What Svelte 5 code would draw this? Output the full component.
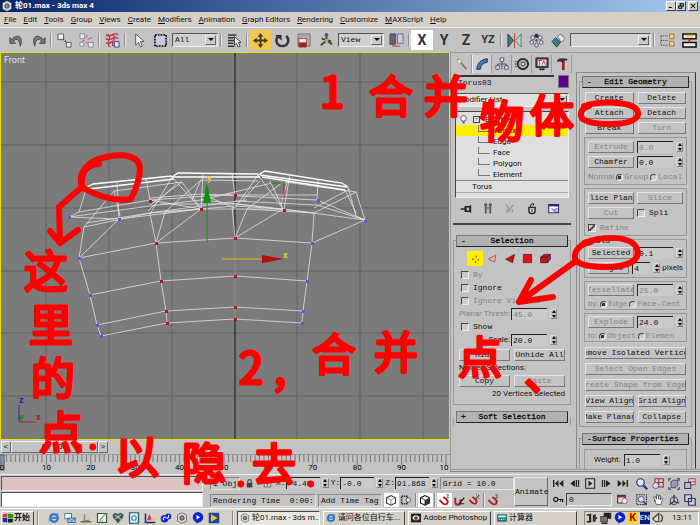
<script>
  const menus = ['File', 'Edit', 'Tools', 'Group', 'Views', 'Create', 'Modifiers', 'Animation', 'Graph Editors', 'Rendering', 'Customize', 'MAXScript', 'Help']

  // icon bodies, drawn on a 16x16 grid
  const icons = {
    logo: '<path d="M8 1l6 3v8l-6 3-6-3V4z" fill="#ddd" stroke="#555"/><circle cx="8" cy="8" r="3" fill="#888" stroke="#333"/>',
    undo: '<path d="M1 5v6h6L5 9c2-4 6-3 7 5 4-10-3-14-9-7z" fill="#777" stroke="#444"/>',
    redo: '<path d="M15 5v6H9l2-2C9 5 5 6 4 14 0 4 7 0 13 7z" fill="#777" stroke="#444"/>',
    link: '<path d="M1 1h6v6H1zM10 10h5v5h-5z" fill="#eef" stroke="#557"/><path d="M6 6l5 5" stroke="#b33" stroke-width="2" stroke-dasharray="2 1"/>',
    unlink: '<path d="M1 1h5v5H1zM10 10h5v5h-5zM1 10h4v4H1z" fill="#eef" stroke="#889"/><path d="M7 5l2-3M9 7l5-2M6 8l-3 1M8 9l1 3" stroke="#c55"/>',
    bind: '<path d="M1 2c5 4 8-4 13 0M1 6c5 4 8-4 13 0M1 10c4 4 5-2 8-1M3 1c6 4-3 9 2 14M8 1c6 4-3 9 1 13" fill="none" stroke="#b34" stroke-width="1.4"/><path d="M10 9h5v6h-5z" fill="#dde" stroke="#447"/>',
    select: '<path d="M5 1v12l3-3 2 5 2-1-2-5h4z" fill="#f2f2f2" stroke="#555"/>',
    region: '<path d="M2 2h12v12H2z" fill="#c9c9dd" stroke="#222" stroke-width="2" stroke-dasharray="2 1"/>',
    byname: '<path d="M1 2h9M1 5h7M1 8h7M1 11h6M1 14h7" stroke="#333" stroke-width="1.6"/><path d="M8 4v9l2-2 2 4 2-1-2-4h3z" fill="#eee" stroke="#444"/>',
    move: '<path d="M8 0l3 4H9v3h3V5l4 3-4 3V9H9v3h2l-3 4-3-4h2V9H4v2L0 8l4-3v2h3V4H5z" fill="#443b22"/>',
    rotate: '<path d="M4 3c-5 4-2 11 4 11 6 0 8-7 4-11" fill="none" stroke="#333" stroke-width="2.6"/><path d="M0 2h7v6z" fill="#333"/>',
    scale: '<path d="M1 1h13v13H1z" fill="#aaa" stroke="#777"/><path d="M2 6h8v9H2z" fill="#eee" stroke="#a44"/><path d="M2 10h8v5H2z" fill="#922"/>',
    manip: '<path d="M8 2v6l-6 5M8 8l6 4M3 6l10 3" fill="none" stroke="#444" stroke-width="2"/><circle cx="8" cy="2" r="2" fill="#557"/><circle cx="8" cy="8" r="2" fill="#ca3"/>',
    pivot: '<path d="M1 1h6v11H1z" fill="#667" stroke="#446"/><path d="M9 1h6v10H9z" fill="#ccd" stroke="#668"/><path d="M4 8v6h8" fill="none" stroke="#b33"/>',
    mirror: '<path d="M1 1v14l6-7z" fill="#477" stroke="#244"/><path d="M15 1v14l-6-7z" fill="#ccc" stroke="#577"/><path d="M8 0v16" stroke="#b44"/>',
    array: '<g fill="#dde" stroke="#456"><circle cx="8" cy="3" r="2" fill="#222"/><circle cx="12" cy="5" r="2"/><circle cx="13" cy="10" r="2"/><circle cx="8" cy="13" r="2"/><circle cx="3" cy="10" r="2"/><circle cx="4" cy="5" r="2"/></g><circle cx="8" cy="8" r="1.5" fill="#a44"/>',
    align: '<path d="M1 9l4-4 5 5-4 5z" fill="#3a7f86" stroke="#245"/><path d="M7 4l3-3 5 5-4 4z" fill="#dfe4e6" stroke="#667"/>',
    tracks: '<path d="M1 3h7M1 8h7M1 13h7M1 3v10" stroke="#333" stroke-dasharray="1 1"/><path d="M10 1h5v5h-5zM10 9h5v5h-5z" fill="#f0d070" stroke="#975"/>',
    schematic: '<path d="M1 1h14v5H1zM1 10h14v5H1z" fill="#eee" stroke="#111" stroke-width="1.6"/><path d="M4 3h8" stroke="#dc2" stroke-width="2"/><path d="M8 6v4" stroke="#c22" stroke-width="2"/>',
    create: '<path d="M3 2l10 12" stroke="#777" stroke-width="2"/><path d="M5 1l1 3 3 1-3 1-1 3-1-3-3-1 3-1z" fill="#f6f0d0" stroke="#bb8"/>',
    modify: '<path d="M2 14C3 6 7 3 14 2v4c-5 1-7 3-8 8z" fill="#447bb5" stroke="#123"/>',
    hierarchy: '<path d="M6 1h4v4H6zM1 10h4v4H1zM11 10h4v4h-4z" fill="#eef" stroke="#446"/><path d="M8 5v3M3 10V8h10v2M8 8v6" fill="none" stroke="#446"/>',
    motion: '<circle cx="9" cy="8" r="6" fill="#aaa" stroke="#222" stroke-width="2"/><circle cx="9" cy="8" r="2" fill="#eee" stroke="#333"/><path d="M0 5h2M0 8h2M0 11h2" stroke="#333"/>',
    display: '<path d="M1 1h14v11H1z" fill="#445" stroke="#223"/><path d="M3 3h10v7H3z" fill="#f4eef4"/><path d="M5 4v5M4 4h4M8 9l2-5 2 5" stroke="#b24" fill="none"/><path d="M5 14h6" stroke="#223" stroke-width="2"/>',
    utility: '<path d="M2 5c1-4 5-4 12-3v2h-3v2H7V5z" fill="#333"/><path d="M8 5h3v10H8z" fill="#922"/>',
    pin: '<path d="M1 8h6M7 4v8M8 5h5v6H8zM14 3v10" stroke="#222" stroke-width="1.8" fill="none"/>',
    show: '<path d="M5 2v12M11 2v12M3 2h4M9 2h4" stroke="#555" stroke-width="2.4" fill="none"/><path d="M7 5h2v4H7z" fill="#777"/>',
    unique: '<path d="M2 3c3 0 4 3 5 8 2-5 3-8 6-8M4 8v5M11 8v5" stroke="#999" stroke-width="1.8" fill="none"/>',
    trash: '<path d="M4 6h8v5c0 4-8 4-8 0z" fill="#eee" stroke="#222" stroke-width="2"/><path d="M6 5c0-5 5-5 4-2M8 8v4" stroke="#222" stroke-width="1.5" fill="none"/>',
    config: '<path d="M1 2h13v11H1z" fill="#fff" stroke="#338" stroke-width="1.6"/><path d="M1 3h13" stroke="#228" stroke-width="3"/><path d="M4 8h3v3M9 8h5v4H9z" stroke="#338" fill="#dde"/>',
    bulb: '<circle cx="8" cy="6" r="5" fill="#fff" stroke="#333" stroke-width="1.4"/><path d="M6 11h4v4H6z" fill="#666"/>',
    vertex: '<path d="M3 8h2v2H3zM8 4h2v2H8zM11 9h2v2h-2zM7 12h2v2H7z" fill="#c22"/>',
    edge: '<path d="M2 9l11-6-2 10z" fill="none" stroke="#d44" stroke-width="1.4"/>',
    face: '<path d="M1 9l13-7-3 12z" fill="#c11" stroke="#411"/>',
    polygon: '<path d="M2 2h12v12H2z" fill="#d11" stroke="#511"/>',
    element: '<path d="M1 6l5-4h9v7l-4 5H1z" fill="#c11" stroke="#300"/><path d="M1 6h10l4-4M11 6v8" stroke="#300" fill="none"/><path d="M11 6l4-4v7l-4 5z" fill="#638"/>',
    lock: '<path d="M3 7h10v8H3z" fill="#444"/><path d="M5 7V4c0-4 6-4 6 0v3" fill="none" stroke="#444" stroke-width="2"/>',
    absmode: '<path d="M2 2h12v12H2z" fill="#ccc" stroke="#333"/><path d="M4 8h8M8 4v8" stroke="#333"/>',
    cube: '<path d="M2 5l6-3 6 3v7l-6 3-6-3z" fill="#fff" stroke="#333" stroke-width="1.4"/><path d="M2 5l6 3 6-3M8 8v7" stroke="#777" fill="none"/>',
    darkcube: '<path d="M2 5l6-3 6 3v7l-6 3-6-3z" fill="#fff" stroke="#111" stroke-width="1.4"/><path d="M8 8l6-3v7l-6 3z" fill="#333"/><path d="M2 5l6 3v7" stroke="#111" fill="none"/>',
    crossing: '<path d="M2 3h8v10H2z" fill="none" stroke="#222" stroke-width="1.8" stroke-dasharray="2 1"/><circle cx="11" cy="8" r="3" fill="#eee" stroke="#333"/>',
    snap: '<path d="M2 8l5 5c5 3 8-3 4-6L7 4" fill="none" stroke="#a22" stroke-width="2.6"/><path d="M11 1h3l-1 2 1 2h-3" stroke="#333" fill="none"/>',
    angle: '<path d="M3 5v6c1 5 7 4 7 0V7" fill="none" stroke="#a22" stroke-width="2.6"/><path d="M8 13l7-8M10 13h5" stroke="#222" stroke-width="1.6"/>',
    percent: '<path d="M2 8l4 4c5 3 7-2 4-5L6 4" fill="none" stroke="#a22" stroke-width="2.4"/><path d="M15 1l-4 5M11 1h1M14 6h1" stroke="#333" stroke-width="1.4"/>',
    first: '<path d="M1 3v10" stroke="#222" stroke-width="2"/><path d="M8 3v10L3 8zM15 3v10l-6-5z" fill="#222"/>',
    prev: '<path d="M9 3v10L2 8z" fill="#222"/><path d="M11 3v10M14 3v10" stroke="#222" stroke-width="1.6"/>',
    play: '<path d="M1 1h13v14H1z" fill="#ccc" stroke="#222" stroke-width="1.5"/><path d="M5 4v8l6-4z" fill="#222"/>',
    next: '<path d="M7 3v10l7-5z" fill="#222"/><path d="M5 3v10M2 3v10" stroke="#222" stroke-width="1.6"/>',
    last: '<path d="M15 3v10" stroke="#222" stroke-width="2"/><path d="M8 3v10l5-5zM1 3v10l6-5z" fill="#222"/>',
    key: '<circle cx="4" cy="8" r="3" fill="none" stroke="#222" stroke-width="1.8"/><path d="M7 8h8M14 8v4M11 8v3" stroke="#222" stroke-width="1.8"/>',
    timecfg: '<path d="M1 2h11v11H1z" fill="#ddd" stroke="#433" stroke-width="1.6"/><path d="M1 4h11" stroke="#822" stroke-width="2"/><circle cx="11" cy="10" r="4" fill="#eee" stroke="#933"/>',
    zoom: '<circle cx="6" cy="6" r="5" fill="#dfe6f4" stroke="#237" stroke-width="1.6"/><path d="M10 10l5 5" stroke="#237" stroke-width="3"/>',
    zoomall: '<path d="M4 1h11v11H4zM4 6h11M9 1v11" fill="#dcc" stroke="#833" stroke-width="1.4"/><circle cx="5" cy="10" r="4" fill="#dde" stroke="#447"/>',
    extents: '<path d="M4 5l3-2h6v7l-3 3H4z" fill="#99b" stroke="#336"/><path d="M1 4V1h3M12 1h3v3M1 12v3h3M15 12v3h-3" stroke="#336" fill="none" stroke-width="1.4"/>',
    extall: '<path d="M6 1h9v8H6z" fill="#ecc" stroke="#833"/><path d="M1 6h8v8H1z" fill="#bbd" stroke="#336" stroke-width="1.4"/><path d="M6 5h9" stroke="#833"/>',
    regzoom: '<path d="M1 1h13v13H1z" fill="none" stroke="#333" stroke-dasharray="2 1" stroke-width="1.4"/><circle cx="7" cy="7" r="4" fill="#dde" stroke="#336"/><path d="M10 10l4 4" stroke="#336" stroke-width="2"/>',
    pan: '<path d="M3 8l3 6h6l2-8-2-1-1 3V2H9v5L8 1H6v6L4 3 2 4l3 6z" fill="#fff" stroke="#444"/>',
    arc: '<circle cx="8" cy="9" r="5" fill="none" stroke="#447" stroke-width="1.4"/><path d="M8 1v9l-6 4M8 10l7 2" stroke="#333" stroke-width="1.6" fill="none"/>',
    minmax: '<path d="M1 1h9v9H1zM6 6h9v9H6z" fill="#ccd" stroke="#336" stroke-width="1.6"/>',
    windows: '<path d="M1 3l6-1v5H1z" fill="#d33"/><path d="M8 2l7 1v5H8z" fill="#292"/><path d="M1 8h6v6l-6-1z" fill="#22a"/><path d="M8 9h7l-1 5H8z" fill="#222"/>',
    ie: '<circle cx="8" cy="8" r="5" fill="none" stroke="#27c" stroke-width="3"/><path d="M4 8h8" stroke="#27c" stroke-width="2"/><path d="M1 13C0 8 10 0 15 3" stroke="#58b" fill="none"/>',
    outlook: '<path d="M1 2h9v7H1z" fill="#fff" stroke="#258"/><path d="M5 8h10v6H5z" fill="#9cf" stroke="#257"/><path d="M5 8l5 4 5-4" stroke="#257" fill="none"/>',
    desktop: '<path d="M1 13h14" stroke="#664" stroke-width="2"/><path d="M6 3v9M6 12l6-1" stroke="#886" stroke-width="2"/>',
    note: '<path d="M2 2h12v12H2z" fill="#fff" stroke="#255" stroke-width="1.6"/><path d="M5 11l8-9" stroke="#c93" stroke-width="2"/><path d="M4 12h6" stroke="#292"/>',
    heart: '<path d="M8 15L1 7V3l4-2 3 2 3-2 4 2v4z" fill="#355"/><path d="M4 4l8 6M12 4l-8 5" stroke="#acc" stroke-width="1.4"/>',
    viewer: '<path d="M2 1h12v14H2z" fill="#def" stroke="#256" stroke-width="1.6"/><circle cx="8" cy="8" r="3" fill="#fff" stroke="#28c" stroke-width="1.6"/>',
    paint: '<path d="M2 2v12h13" stroke="#228" fill="none" stroke-width="2"/><path d="M4 11l3-8 5 8z" fill="#c36"/><path d="M9 8h5v4H9z" fill="#ec3"/>',
    arrows: '<circle cx="6" cy="9" r="5" fill="#12c"/><circle cx="11" cy="6" r="4" fill="#12c"/><path d="M5 11c-2-3 1-5 3-4M11 4c2 3-1 5-3 4" stroke="#fff" fill="none" stroke-width="1.6"/>',
    globe: '<circle cx="8" cy="7" r="7" fill="#12c"/><path d="M8 14l-2 2V7h4z" fill="#12c"/><path d="M6 4l5 3-5 3z" fill="#fff"/>',
    player: '<path d="M1 1h14v14H1z" fill="#23459a"/><path d="M4 3l9 5-9 5z" fill="#fb3"/>',
    photoshop: '<path d="M0 1h16v14H0z" fill="#222"/><path d="M2 8c3-6 9-6 12 0-3 5-9 5-12 0z" fill="#fff"/><circle cx="8" cy="8" r="3" fill="#733"/>',
    calc: '<path d="M0 2h16v12H0z" fill="#277"/><path d="M2 4h12v3H2z" fill="#cff"/><path d="M3 10h10" stroke="#9dd" stroke-width="2" stroke-dasharray="2 1"/>',
    net: '<path d="M1 4h4v9H1M6 2v12M10 4v9M10 8h5M12 3v10" stroke="#222" stroke-width="1.8" fill="none"/>',
    monitors: '<path d="M5 1h10v8H5z" fill="#222"/><path d="M1 6h9v7H1z" fill="#777" stroke="#222"/><path d="M2 15h8" stroke="#222" stroke-width="2"/>',
    volume: '<path d="M1 9l8-7v11H5z" fill="#ddd" stroke="#333" stroke-width="1.4"/><path d="M11 3c4 2 4 8 0 10" stroke="#333" fill="none" stroke-width="1.6"/>'
  }

  const modifiers = ['Vertex', 'Edge', 'Face', 'Polygon', 'Element']
  const panel_tabs = ['create', 'modify', 'hierarchy', 'motion', 'display', 'utility']
  const stack_tools = ['pin', 'show', 'unique', 'trash', 'config']
  const sub_levels = ['vertex', 'edge', 'face', 'polygon', 'element']
  const playback = ['first', 'prev', 'play', 'next', 'last']
  const nav_tools = ['zoom', 'zoomall', 'extents', 'extall', 'regzoom', 'pan', 'arc', 'minmax']
  const quick_launch = ['ie', 'outlook', 'desktop', 'note', 'heart', 'viewer', 'paint', 'arrows', 'logo', 'globe', 'player']
  const tasks = [
    { icon: 'logo', title: '轮01.max - 3ds m...', active: true },
    { icon: 'ie', title: '请问各位自行车...' },
    { icon: 'photoshop', title: 'Adobe Photoshop' },
    { icon: 'calc', title: '计算器' }
  ]

  // viewport grid
  const grid_x = [46, 109, 172, 297, 360, 423]
  const grid_y = [82, 145, 208, 271, 333, 396]

  // lower part of the mesh, row by row
  const rows = [
    [[79, 258], [156, 243], [235, 238], [312, 243]],
    [[90, 295], [161, 281], [235, 276], [307, 281]],
    [[97, 325], [166, 311], [235, 307], [303, 311]],
    [[101, 336], [167, 323], [235, 319], [302, 323]]
  ]
  const columns = [0, 1, 2, 3].map((i) => rows.map((row) => row[i]))
  const wires = [
    '79,258 84,227 114,191 182,182', '79,258 119,219 201,209', '69,217 79,212 87,187', '79,212 150,200 235,194',
    '69,217 150,206 201,200 283,209', '69,217 119,219', '84,227 150,213 201,209', '86,223 163,211 247,200', '117,183 119,219', '114,191 120,216',
    '146,179 150,200 201,209', '172,177 201,209', '172,177 150,214 156,243', '182,182 201,209', '176,184 148,211',
    '156,243 165,212 201,180', '156,243 201,209', '182,182 150,205', '203,173 201,209', '232,173 235,195',
    '201,180 258,181', '201,180 192,200', '150,198 201,194 317,200', '160,204 235,204 314,213', '165,212 235,206 283,209',
    '201,209 232,209 283,209', '235,238 232,206', '235,238 247,209 283,182', '235,238 283,209',
    '258,175 235,208', '258,175 283,209', '270,181 283,209', '260,181 243,200', '290,174 284,209', '287,182 281,205',
    '318,180 317,200 365,220', '235,195 317,195', '235,201 317,205 365,220', '283,209 365,220', '247,209 314,213',
    '312,243 314,213 356,192', '312,243 365,220', '314,208 350,189', '348,187 356,216 365,220', '356,192 365,220',
    '285,182 356,192', '345,190 356,213', '201,194 235,208', '201,200 272,183'
  ]
  const ridges = [
    '87,187 93,184 172,176', '89,189 174,179', '172,177 178,173 258,174', '172,177 260,177',
    '258,175 265,171 342,183 348,187', '260,175 347,187', '262,177 345,190'
  ]
  const red_points = [...rows.flatMap((row) => [row[1], row[2]]), [150, 201], [201, 209], [235, 195], [284, 210]]
  const blue_points = [...rows.flatMap((row) => [row[0], row[3]]), [69, 217], [119, 219], [318, 200], [365, 221]]

  const ticks = Array.from({ length: 101 }, (_, i) => i)

  let sub_level = $state('Vertex')
  let frame = $state('0')
</script>

{#snippet icon(name)}
  <svg class="icon" viewBox="0 0 16 16" aria-hidden="true">{@html icons[name]}</svg>
{/snippet}

{#snippet tool(name, state = '')}
  <button class="tool {state}" aria-label={name}>{@render icon(name)}</button>
{/snippet}

{#snippet combo(label, value, size)}
  <span class="combo {size}">
    <select aria-label={label}><option>{value}</option></select>
  </span>
{/snippet}

{#snippet spin(label, value, disabled = false, size = '')}
  <span class="spin {size}">
    <input type="text" aria-label={label} {value} {disabled} />
    <span class="arrows"></span>
  </span>
{/snippet}

{#snippet check(label, disabled = false, checked = false)}
  <label class="option" class:off={disabled}><input type="checkbox" {disabled} {checked} />{label}</label>
{/snippet}

{#snippet radio(group, label, checked = false)}
  <label class="option off"><input type="radio" name={group} disabled {checked} />{label}</label>
{/snippet}

<div class="app">
  <header class="titlebar">
    {@render icon('logo')}
    <h1>轮01.max - 3ds max 4</h1>
    <div class="window-buttons">
      <button aria-label="Minimize"><svg viewBox="0 0 8 8"><path d="M1 6h4" /></svg></button>
      <button aria-label="Restore"><svg viewBox="0 0 8 8"><path d="M3 1h4v3H3zM1 4h4v3H1z" /></svg></button>
      <button class="close" aria-label="Close"><svg viewBox="0 0 8 8"><path d="M1 1l6 6M7 1L1 7" /></svg></button>
    </div>
  </header>

  <nav class="menubar">
    {#each menus as menu}
      <button><u>{menu[0]}</u>{menu.slice(1)}</button>
    {/each}
  </nav>

  <div class="toolbar">
    {@render tool('undo')}{@render tool('redo')}
    <i class="sep"></i>
    {@render tool('link')}{@render tool('unlink')}
    <i class="sep"></i>
    {@render tool('bind')}
    <i class="sep"></i>
    {@render tool('select')}{@render tool('region')}
    {@render combo('Selection filter', 'All', 'medium')}
    <i class="sep"></i>
    {@render tool('byname')}
    <i class="sep"></i>
    {@render tool('move', 'active')}{@render tool('rotate')}{@render tool('scale')}{@render tool('manip')}
    {@render combo('Coordinate system', 'View', 'medium')}
    {@render tool('pivot')}
    <i class="sep"></i>
    <button class="tool axis pressed">X</button>
    <button class="tool axis">Y</button>
    <button class="tool axis">Z</button>
    <button class="tool axis pair">YZ</button>
    <i class="sep"></i>
    {@render tool('mirror')}{@render tool('array')}{@render tool('align')}
    {@render combo('Named selection sets', '', 'wide')}
    <i class="sep"></i>
    {@render tool('tracks')}{@render tool('schematic')}
  </div>

  <main class="workspace">
    <div class="scene">
      <svg class="viewport" viewBox="1 53 448 386" preserveAspectRatio="xMidYMid slice">
        <g class="grid">
          {#each grid_x as x}<path d="M{x} 0v600" />{/each}
          {#each grid_y as y}<path d="M-200 {y}h900" />{/each}
          <path class="origin" d="M235 0v600" />
        </g>
        <g class="mesh">
          {#each [...rows, ...columns] as line}<polyline points={line.join(' ')} />{/each}
          {#each wires as points}<polyline {points} />{/each}
          {#each ridges as points}<polyline class="ridge" {points} />{/each}
        </g>
        {#each red_points as [x, y]}<rect class="picked" x={x - 1} y={y - 1} width="3" height="3" />{/each}
        {#each blue_points as [x, y]}<rect class="free" x={x - 1} y={y - 1} width="3" height="3" />{/each}
        <path d="M207 243v-55M271 183h12" stroke="#1a8a1a" />
        <path d="M203 203l4-20 4 20z" fill="#0c8f0c" />
        <path d="M284 184v14" stroke="#b22" />
        <path d="M222 259h42" stroke="#d8c010" />
        <path d="M262 255l22 4-22 4z" fill="#b80c0c" />
        <text class="gizmo" x="207" y="181">y</text>
        <text class="gizmo" x="283" y="258">x</text>
        <path d="M19 422v-17" stroke="#22a" />
        <path d="M19 422h17" stroke="#a22" />
        <text class="tripod blue" x="19" y="403">z</text>
        <text class="tripod green" x="19" y="420">y</text>
        <text class="tripod red" x="36" y="420">x</text>
        <text class="view-name" x="4" y="63">Front</text>
      </svg>

      <div class="time-slider">
        <button aria-label="Previous frame">&lt;</button>
        <button class="thumb">0 / 100</button>
        <button aria-label="Next frame">&gt;</button>
      </div>

      <svg class="ruler" viewBox="0 0 450 20">
        <path d="M0 0h450" />
        <rect x="0" y="1" width="4" height="15" />
        {#each ticks as t}
          <path d="M{2 + t * 4.44} 1v{t % 10 ? 7 : 10}" />
          {#if t % 10 === 0 && t < 100}<text x={2 + t * 4.44} y="16">{t}</text>{/if}
        {/each}
        <text x="444" y="16">10</text>
      </svg>
    </div>

    <aside class="command-panel">
      <div class="tabs">
        {#each panel_tabs as tab}{@render tool(tab, tab === 'modify' ? 'current' : '')}{/each}
      </div>

      <div class="panel-columns">
        <div class="left-column">
          <div class="object-name">
            <input type="text" aria-label="Object name" value="Torus03" />
            <span class="swatch"></span>
          </div>
          <span class="combo modifier-list">
            <select aria-label="Modifier List"><option>Modifier List</option></select>
          </span>
          <ul class="stack">
            <li class="mesh-row">{@render icon('bulb')}<span class="expander">-</span>Edit Mesh</li>
            {#each modifiers as name}
              <li class="sub" class:current={sub_level === name}>
                <button onclick={() => (sub_level = name)}>{name}</button>
              </li>
            {/each}
            <li class="base">Torus</li>
          </ul>
          <div class="stack-tools">
            {#each stack_tools as name}{@render tool(name)}{/each}
          </div>

          <section class="rollup">
            <h2><span>-</span>Selection</h2>
            <div class="levels">
              {#each sub_levels as name}{@render tool(name, name === 'vertex' ? 'picked-level' : '')}{/each}
            </div>
            <div class="lines">
              {@render check('By', true)}
              {@render check('Ignore')}
              {@render check('Ignore Visible', true)}
              <div class="value-line off"><span class="sans">Planar Thresh:</span>{@render spin('Planar Thresh', '45.0', true)}</div>
              {@render check('Show')}
              <div class="value-line"><span class="sans">Scale:</span>{@render spin('Scale', '20.0')}</div>
            </div>
            <div class="pair-row"><button class="push">Hide</button><button class="push">Unhide All</button></div>
            <p class="sans">Named Selections:</p>
            <div class="pair-row"><button class="push">Copy</button><button class="push" disabled>Paste</button></div>
            <p class="sans count">20 Vertices Selected</p>
          </section>

          <section class="rollup closed">
            <h2><span>+</span>Soft Selection</h2>
          </section>
        </div>

        <div class="right-column">
          <section class="rollup">
            <h2><span>-</span>Edit Geometry</h2>
            <div class="geometry">
              <div class="pair-row"><button class="push">Create</button><button class="push">Delete</button></div>
              <div class="pair-row"><button class="push">Attach</button><button class="push">Detach</button></div>
              <div class="pair-row"><button class="push">Break</button><button class="push" disabled>Turn</button></div>
              <div class="group">
                <div class="pair-row"><button class="push" disabled>Extrude</button>{@render spin('Extrude', '0.0', true)}</div>
                <div class="pair-row"><button class="push">Chamfer</button>{@render spin('Chamfer', '0.0')}</div>
                <div class="radios"><span class="sans off">Normal</span>{@render radio('normal', 'Group', true)}{@render radio('normal', 'Local')}</div>
              </div>
              <div class="group">
                <div class="pair-row"><button class="push">Slice Plane</button><button class="push" disabled>Slice</button></div>
                <div class="pair-row"><button class="push" disabled>Cut</button>{@render check('Spli')}</div>
                {@render check('Refine', true, true)}
              </div>
              <div class="group weld">
                <span class="caption">Weld</span>
                <div class="pair-row"><button class="push">Selected</button>{@render spin('Weld threshold', '0.1')}</div>
                <div class="pair-row"><button class="push">Target</button><span class="target">{@render spin('Target', '4', false, 'narrow')}<span class="sans">pixels</span></span></div>
              </div>
              <div class="group short">
                <div class="pair-row"><button class="push" disabled>Tessellate</button>{@render spin('Tessellate', '25.0', true)}</div>
                <div class="radios"><span class="sans off">by:</span>{@render radio('by', 'Edge', true)}{@render radio('by', 'Face-Cent')}</div>
              </div>
              <div class="group short">
                <div class="pair-row"><button class="push" disabled>Explode</button>{@render spin('Explode', '24.0')}</div>
                <div class="radios"><span class="sans off">to:</span>{@render radio('to', 'Object', true)}{@render radio('to', 'Elemen')}</div>
              </div>
            </div>
            <div class="mesh-tools">
              <button class="push">Remove Isolated Vertices</button>
              <button class="push" disabled>Select Open Edges</button>
              <button class="push" disabled>Create Shape from Edges</button>
              <div class="pair-row"><button class="push">View Align</button><button class="push">Grid Align</button></div>
              <div class="pair-row"><button class="push">Make Planar</button><button class="push">Collapse</button></div>
            </div>
          </section>

          <section class="rollup surface">
            <h2><span>-</span>Surface Properties</h2>
            <div class="group weight"><span class="sans">Weight:</span>{@render spin('Weight', '1.0')}</div>
          </section>
        </div>
      </div>
    </aside>
  </main>

  <footer class="status">
    <div class="listener">
      <input class="macro" type="text" aria-label="Macro recorder" />
      <input type="text" aria-label="MAXScript listener" />
    </div>
    <div class="readout">
      <div class="coords">
        <span class="sunken">1 Obj</span>
        {@render tool('lock')}{@render tool('absmode')}
        <span>X:</span>{@render spin('X', '-4.45')}
        <span>Y:</span>{@render spin('Y', '-0.0')}
        <span>Z:</span>{@render spin('Z', '91.868')}
        <span class="sunken grid-size">Grid = 10.0</span>
      </div>
      <div class="prompt">
        <span class="sunken time">Rendering Time&nbsp; 0:00:</span>
        <span class="sunken">Add Time Tag</span>
        {@render tool('cube', 'pressed')}{@render tool('crossing')}
        <i class="sep"></i>
        {@render tool('darkcube', 'pressed')}
        <i class="sep"></i>
        {@render tool('snap', 'pressed')}{@render tool('angle')}{@render tool('percent')}
        <i class="sep"></i>
        {@render tool('snap')}
      </div>
    </div>
    <button class="animate">Animate</button>
    <div class="playback">
      <div>{#each playback as name}{@render tool(name)}{/each}</div>
      <div>
        {@render tool('key')}
        <input type="text" aria-label="Current frame" bind:value={frame} />
        {@render tool('timecfg')}
      </div>
    </div>
    <div class="nav-tools">
      {#each nav_tools as name}{@render tool(name)}{/each}
    </div>
  </footer>

  <footer class="taskbar">
    <button class="start">{@render icon('windows')}开始</button>
    <i class="sep"></i>
    <div class="quick">
      {#each quick_launch as name}{@render tool(name)}{/each}
    </div>
    <i class="sep"></i>
    <div class="tasks">
      {#each tasks as task}
        <button class:active={task.active}>{@render icon(task.icon)}<span>{task.title}</span></button>
      {/each}
    </div>
    <div class="tray">
      {@render icon('net')}{@render icon('monitors')}{@render icon('globe')}
      <b class="kav">K</b>
      <b class="lang">EN</b>
      {@render icon('volume')}
      <time>13:11</time>
    </div>
  </footer>

  <!-- red marker notes over the window -->
  <svg class="notes" viewBox="0 0 700 525">
    <path d="M99 164c-14 1-18 9-17 24-5-14 4-27 24-31 18-4 33-1 34 11 0 8-4 21-9 31-14 3-35-3-49-12L59 207l1 36M50 231l10 12 18-13" />
    <path d="M584 106c16-5 47-5 53 4 5 9-8 14-26 14-20 0-32-3-30-11 1-4 4-6 8-7" />
    <path d="M584 243c18-7 48-8 53 6 4 12-10 18-31 18-19 0-33-3-31-12 1-7 8-12 16-13M576 261l-57 41M531 280l-12 22 34-5" />
    <text x="320 369 424 480 530" y="108 113 113 138 132">1合并物体</text>
    <text x="239 312 374 458" y="384 371 369 374">2合并点</text>
    <text x="274 524" y="384 390">,、</text>
    <text x="24 29 31 39" y="288 342 395 449">这里的点</text>
    <text class="dots" x="75 89" y="449">..</text>
    <text x="115 182 252" y="473 480 481">以隐去</text>
    <text class="dots" x="237 307" y="486">..</text>
  </svg>
</div>

<style>
  :global(body) {
    margin: 0;
    background: #c3c3c3;
  }

  .app {
    --mono: 'Liberation Mono', 'Noto Sans CJK SC', monospace;
    --sans: Roboto, 'Noto Sans CJK SC', sans-serif;
    position: relative;
    display: flex;
    flex-direction: column;
    min-height: 100vh;
    overflow: hidden;
    font: 8px/12px var(--mono);
    color: #111;
    background: #c3c3c3;
  }

  .app * {
    box-sizing: border-box;
  }

  button,
  input,
  select {
    margin: 0;
    padding: 0;
    border: 0;
    border-radius: 0;
    background: none;
    font: inherit;
    color: inherit;
    appearance: none;
  }

  .icon {
    display: block;
    flex: none;
    width: 12px;
    height: 12px;
  }

  .sans {
    font-family: var(--sans);
  }

  .off {
    color: #858585;
  }

  .sep {
    flex: none;
    width: 2px;
    height: 14px;
    margin: 0 1px;
    border-left: 1px solid #8a8a8a;
    border-right: 1px solid #e8e8e8;
  }

  .titlebar {
    display: flex;
    align-items: center;
    gap: 2px;
    height: 12px;
    padding: 0 2px 0 1px;
    background: linear-gradient(90deg, #0a246a, #a6caf0);
    color: #fff;
  }

  .titlebar h1 {
    flex: 1;
    margin: 0;
    font: bold 8px/12px var(--sans);
  }

  .window-buttons {
    display: flex;
  }

  .window-buttons button {
    width: 10px;
    height: 10px;
    padding: 1px;
    background: #d4d0c8;
    border: 1px solid;
    border-color: #fff #444 #444 #fff;
  }

  .window-buttons .close {
    margin-left: 2px;
  }

  .window-buttons svg {
    display: block;
    fill: none;
    stroke: #000;
    stroke-width: 1.4;
  }

  .menubar {
    display: flex;
    gap: 7px;
    height: 15px;
    padding: 0 4px;
    background: #d4d0c8;
    font-family: var(--sans);
  }

  .toolbar {
    display: flex;
    align-items: center;
    height: 25px;
    padding-left: 5px;
    overflow: hidden;
    border-top: 1px solid #eee;
    background: #c3c3c3;
  }

  .tool {
    display: flex;
    flex: none;
    align-items: center;
    justify-content: center;
    width: 22px;
    height: 20px;
  }

  .toolbar .icon {
    width: 15px;
    height: 15px;
  }

  .tool.active {
    background: #f2c84e;
  }

  .tool.pressed {
    background: #fff;
  }

  .axis {
    font: bold 14px/20px var(--sans);
    color: #333;
  }

  .pair {
    font-size: 11px;
  }

  .combo {
    position: relative;
    flex: none;
    height: 14px;
    margin: 0 1px;
    border: 1px solid;
    border-color: #555 #eee #eee #555;
    background: #d0d0d0;
  }

  .combo::after {
    content: '';
    position: absolute;
    top: 4px;
    right: 3px;
    border: 3px solid transparent;
    border-top-color: #111;
    pointer-events: none;
  }

  .combo::before {
    content: '';
    position: absolute;
    inset: 1px 1px 1px auto;
    width: 9px;
    background: #c8c8c8;
    border: 1px solid;
    border-color: #eee #666 #666 #eee;
    pointer-events: none;
  }

  .combo select {
    display: block;
    width: 100%;
    height: 12px;
    padding-left: 2px;
  }

  .medium {
    width: 46px;
  }

  .wide {
    width: 81px;
  }

  .workspace {
    display: flex;
    flex: 1;
  }

  .scene {
    display: flex;
    flex: 1;
    flex-direction: column;
    min-width: 0;
  }

  .viewport {
    flex: 1;
    width: 100%;
    min-height: 0;
    border: 1px solid #e8e000;
    background: #7b7b7b;
  }

  .grid path {
    stroke: #626262;
  }

  .grid .origin {
    stroke: #161616;
  }

  .mesh polyline {
    fill: none;
    stroke: #e2e2e2;
    stroke-width: 0.8;
  }

  .mesh .ridge {
    stroke: #fff;
    stroke-width: 1.3;
  }

  .picked {
    fill: #b01818;
  }

  .free {
    fill: #5555dd;
  }

  .gizmo,
  .tripod {
    font: bold 9px var(--sans);
    fill: #e0cc20;
  }

  .tripod.blue {
    fill: #22a;
  }

  .tripod.green {
    fill: #181;
  }

  .tripod.red {
    fill: #a22;
  }

  .view-name {
    font: 9px var(--sans);
    fill: #e0e0e0;
  }

  .time-slider {
    display: flex;
    height: 14px;
    padding: 1px;
  }

  .time-slider button {
    width: 10px;
    border: 1px solid;
    border-color: #eee #666 #666 #eee;
    line-height: 10px;
  }

  .time-slider .thumb {
    width: 87px;
    font-family: var(--sans);
  }

  .ruler {
    display: block;
    width: 100%;
  }

  .ruler path {
    stroke: #777;
  }

  .ruler rect {
    fill: #9ab;
    stroke: #456;
  }

  .ruler text {
    font: 8px var(--sans);
    text-anchor: middle;
  }

  .command-panel {
    width: 250px;
    height: 420px;
    overflow: hidden;
    border-left: 1px solid #999;
    border-bottom: 1px solid #888;
  }

  .tabs {
    display: flex;
    height: 20px;
    padding: 2px 0 0 1px;
    border-top: 1px solid #999;
  }

  .tabs .tool {
    width: 20px;
    height: 18px;
    border-right: 1px solid #999;
  }

  .tabs .current {
    border-left: 1px solid #eee;
    background: #d0d0d0;
  }

  .tabs .icon {
    width: 14px;
    height: 14px;
  }

  .panel-columns {
    display: flex;
    height: 398px;
    border-bottom: 1px solid #999;
    overflow: hidden;
  }

  .left-column {
    display: flex;
    flex-direction: column;
    width: 125px;
    padding: 3px 5px 0 2px;
  }

  .right-column {
    flex: 1;
    min-width: 0;
    margin-right: 4px;
    padding: 2px 3px 0 2px;
    border: 1px solid;
    border-color: #888 #333 transparent #888;
  }

  .object-name {
    display: flex;
    gap: 4px;
    height: 13px;
    margin: 0 2px 5px;
  }

  .object-name input {
    flex: 1;
    min-width: 0;
    padding-left: 2px;
    border-top: 2px solid #333;
    border-left: 1px solid #555;
  }

  .swatch {
    width: 11px;
    background: #5a0090;
    border: 1px solid #777;
  }

  .modifier-list {
    margin: 0 2px 4px;
    background: #e0e0e0;
    font-family: var(--sans);
  }

  .stack {
    height: 87px;
    margin: 0 2px;
    padding: 2px 0;
    list-style: none;
    border: 1px solid;
    border-color: #444 #eee #eee #444;
    background: #dfdfdf;
    font: 8px/11px var(--sans);
  }

  .mesh-row {
    display: flex;
    align-items: center;
    gap: 5px;
    padding-left: 3px;
    height: 11px;
  }

  .mesh-row .icon {
    width: 9px;
    height: 9px;
  }

  .expander {
    width: 7px;
    height: 7px;
    border: 1px solid #444;
    line-height: 4px;
    text-align: center;
  }

  .sub {
    display: flex;
    height: 11px;
    padding-left: 22px;
  }

  .sub::before {
    content: '';
    width: 11px;
    height: 6px;
    margin-right: 3px;
    border-left: 1px solid #777;
    border-bottom: 1px solid #777;
  }

  .sub.current {
    background: #ffee00;
  }

  .base {
    padding-left: 16px;
    border-top: 1px solid #888;
    border-bottom: 1px solid #aaa;
  }

  .stack-tools {
    display: flex;
    justify-content: space-between;
    height: 27px;
    margin-bottom: 15px;
    padding: 3px 8px 0 2px;
    border-bottom: 2px solid #444;
  }

  .stack-tools .tool {
    height: 16px;
  }

  .rollup {
    margin-top: 6px;
    padding: 0 5px 3px;
    border: 1px solid #999;
  }

  .rollup h2 {
    position: relative;
    height: 12px;
    margin: -6px -3px 0;
    border: 1px solid;
    border-color: #777 #222 #222 #777;
    background: #b2b2b2;
    font: 8px/10px var(--mono);
    text-align: center;
    -webkit-text-stroke: 0.3px;
  }

  .rollup h2 span {
    position: absolute;
    left: 4px;
  }

  .left-column .rollup {
    margin-top: 0;
  }

  .left-column .closed {
    height: 8px;
    margin-top: 12px;
    padding-bottom: 0;
    border-top: 0;
    border-bottom: 0;
  }

  .levels {
    display: flex;
    height: 22px;
    padding: 4px 12px 2px 8px;
    justify-content: space-between;
  }

  .levels .tool {
    width: 16px;
    height: 15px;
  }

  .levels .icon {
    width: 11px;
    height: 11px;
  }

  .picked-level {
    background: #fff000;
  }

  .lines {
    display: flex;
    flex-direction: column;
    gap: 1px;
    margin-bottom: 3px;
  }

  .lines .option {
    padding-left: 2px;
  }

  .option {
    display: flex;
    align-items: center;
    gap: 4px;
    height: 12px;
    white-space: nowrap;
  }

  .option input {
    flex: none;
    width: 8px;
    height: 8px;
    border: 1px solid;
    border-color: #444 #eee #eee #444;
    background: #ccc;
  }

  .option input[type='radio'] {
    width: 7px;
    height: 7px;
    border-radius: 50%;
  }

  .option input:checked {
    background: radial-gradient(#333 40%, #ccc 50%);
  }

  .option input[type='checkbox']:checked {
    background: linear-gradient(135deg, #ccc 40%, #555 40% 60%, #ccc 60%);
  }

  .value-line {
    display: flex;
    align-items: center;
    justify-content: flex-end;
    gap: 1px;
    padding-right: 8px;
    white-space: nowrap;
  }

  .spin {
    display: flex;
    align-items: center;
    gap: 3px;
    min-width: 0;
  }

  .spin input {
    width: 36px;
    height: 12px;
    padding-left: 1px;
    border-top: 1px solid #222;
    border-left: 1px solid #222;
    background: #cacaca;
  }

  .spin input:disabled {
    color: #808080;
  }

  .spin.narrow input {
    width: 18px;
  }

  .arrows {
    display: grid;
    flex: none;
    gap: 2px;
    width: 7px;
    height: 10px;
    align-content: center;
    justify-content: center;
    border: 1px solid;
    border-color: #ddd #888 #888 #ddd;
  }

  .arrows::before,
  .arrows::after {
    content: '';
    border: 2px solid transparent;
    border-top: 0;
    border-bottom: 3px solid #111;
  }

  .arrows::after {
    border-bottom: 0;
    border-top: 3px solid #111;
  }

  .pair-row {
    display: grid;
    grid-template-columns: 1fr 1fr;
    gap: 4px;
  }

  .push {
    display: flex;
    align-items: center;
    justify-content: center;
    min-width: 0;
    height: 12px;
    overflow: hidden;
    white-space: nowrap;
    border: 1px solid;
    border-color: #e4e4e4 #777 #777 #e4e4e4;
  }

  .push:disabled {
    color: #858585;
  }

  .left-column p {
    height: 14px;
    margin: 0;
    line-height: 14px;
  }

  .left-column .count {
    text-align: right;
  }

  .geometry {
    display: flex;
    flex-direction: column;
    gap: 3px;
    padding-top: 4px;
  }

  .group {
    display: flex;
    flex-direction: column;
    gap: 3px;
    margin: 0 -1px;
    padding: 3px 3px 1px;
    border: 1px solid #999;
  }

  .group .pair-row {
    gap: 3px;
  }

  .group.weld {
    position: relative;
    padding: 7px 3px 3px;
  }

  .caption {
    position: absolute;
    top: -5px;
    left: 6px;
    background: #c3c3c3;
  }

  .group.short {
    padding: 2px 3px 0;
  }

  .short .radios,
  .short .option {
    height: 10px;
  }

  .target,
  .radios {
    display: flex;
    align-items: center;
    gap: 2px;
  }

  .radios .option {
    gap: 1px;
  }

  .mesh-tools {
    display: grid;
    gap: 4px;
    padding-top: 5px;
  }

  .rollup.surface {
    margin-top: 11px;
    padding-bottom: 20px;
  }

  .group.weight {
    flex-direction: row;
    align-items: center;
    margin-top: 4px;
    padding: 4px 9px 20px;
  }

  .status {
    display: flex;
    align-items: center;
    height: 34px;
    border-top: 1px solid #eee;
  }

  .listener {
    display: grid;
    flex: 1;
    gap: 1px;
    min-width: 0;
    margin: 0 7px 0 1px;
  }

  .listener input {
    width: 100%;
    height: 15px;
    border: 1px solid;
    border-color: #555 #eee #eee #555;
    background: #fff;
  }

  .listener .macro {
    background: #dcc2c2;
  }

  .readout {
    display: grid;
    gap: 3px;
    width: 304px;
  }

  .coords,
  .prompt {
    display: flex;
    align-items: center;
    height: 14px;
    white-space: nowrap;
  }

  .coords .tool {
    width: 18px;
    height: 14px;
  }

  .coords .icon {
    width: 9px;
    height: 9px;
  }

  .coords .spin input {
    width: 34px;
  }

  .coords .spin {
    gap: 2px;
    margin-right: 2px;
  }

  .sunken {
    height: 13px;
    padding: 0 2px;
    overflow: hidden;
    border: 1px solid;
    border-color: #888 #e4e4e4 #e4e4e4 #888;
  }

  .grid-size {
    flex: 1;
  }

  .time {
    width: 106px;
  }

  .prompt .tool {
    width: 15px;
    height: 14px;
  }

  .prompt .sunken {
    margin-right: 2px;
  }

  .animate {
    width: 34px;
    height: 29px;
    border: 1px solid;
    border-color: #eee #666 #666 #eee;
    font-family: var(--mono);
  }

  .playback {
    display: grid;
    gap: 1px;
    width: 86px;
    padding-left: 2px;
  }

  .playback div {
    display: flex;
    align-items: center;
  }

  .playback .tool {
    width: 16px;
    height: 15px;
  }

  .playback .icon {
    width: 11px;
    height: 11px;
  }

  .playback input {
    width: 46px;
    height: 13px;
    margin-right: 2px;
    padding-left: 2px;
    border: 1px solid;
    border-color: #444 #eee #eee #444;
  }

  .nav-tools {
    display: grid;
    grid-template-columns: repeat(4, 16px);
    padding-right: 2px;
  }

  .nav-tools .tool {
    width: 16px;
    height: 16px;
  }

  .taskbar {
    display: flex;
    align-items: center;
    gap: 2px;
    height: 19px;
    padding: 0 1px;
    border-top: 1px solid #fff;
    background: #d4d0c8;
    font-family: var(--sans);
  }

  .start {
    display: flex;
    align-items: center;
    width: 33px;
    height: 15px;
    border: 1px solid;
    border-color: #fff #444 #444 #fff;
    font-weight: bold;
  }

  .quick {
    display: flex;
    flex: none;
    width: 187px;
    padding: 0 8px 0 4px;
  }

  .quick .tool {
    width: 16px;
    height: 15px;
  }

  .tasks {
    display: grid;
    flex: 1;
    grid-template-columns: repeat(4, minmax(0, 1fr));
    gap: 3px;
  }

  .tasks button {
    display: flex;
    align-items: center;
    gap: 2px;
    height: 15px;
    padding-left: 2px;
    overflow: hidden;
    white-space: nowrap;
    border: 1px solid;
    border-color: #fff #444 #444 #fff;
  }

  .tasks .icon {
    width: 10px;
    height: 10px;
  }

  .tasks .active {
    border-color: #444 #fff #fff #444;
    background: #e8e6e0;
  }

  .tray {
    display: flex;
    align-items: center;
    gap: 2px;
    height: 15px;
    margin-left: 5px;
    padding: 0 6px 0 1px;
    border: 1px solid;
    border-color: #888 #fff #fff #888;
  }

  .kav {
    width: 10px;
    background: #f4d820;
    color: #c00;
    font-size: 11px;
    text-align: center;
  }

  .lang {
    background: #0a1a7a;
    color: #fff;
    font-weight: normal;
  }

  .tray time {
    margin-left: 6px;
  }

  .notes {
    position: absolute;
    top: 0;
    left: 0;
    width: 100%;
    pointer-events: none;
  }

  .notes path {
    fill: none;
    stroke: #f00;
    stroke-width: 6;
    stroke-linecap: round;
    stroke-linejoin: round;
  }

  .notes text {
    font: 44px 'Noto Sans CJK SC', sans-serif;
    fill: #f00;
    stroke: #f00;
    stroke-width: 3;
    stroke-linejoin: round;
  }

  .notes .dots {
    font-size: 28px;
  }
</style>
